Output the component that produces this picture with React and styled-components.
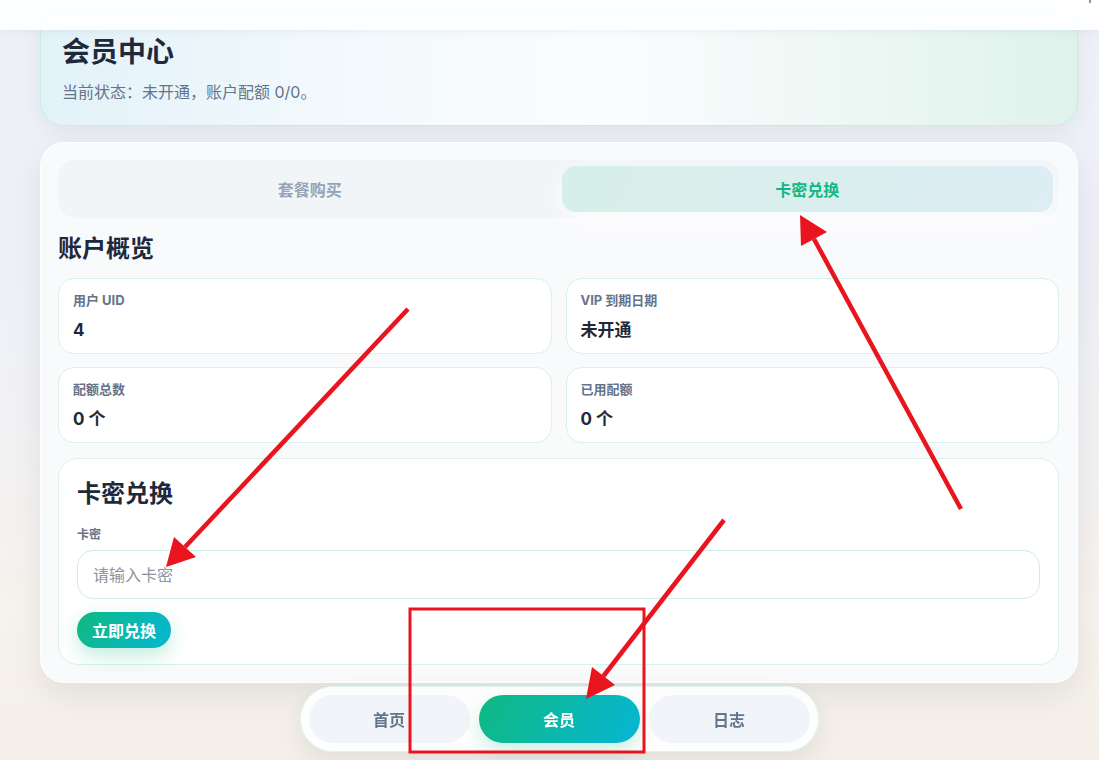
import React, { useState } from 'react'
import styled, { createGlobalStyle } from 'styled-components'

const GlobalStyle = createGlobalStyle`
  * { box-sizing: border-box; }
  html, body { height: 100%; }
  body {
    margin: 0;
    overflow: hidden;
    font-family: Inter, "Noto Sans CJK SC", sans-serif;
    color: #1e293b;
    background: linear-gradient(180deg, #eef0f9 0%, #f0f1f6 45%, #f6f2ed 80%, #f4efe8 100%);
  }
`

const TopBar = styled.div`
  position: fixed;
  top: 0;
  left: 0;
  right: 0;
  height: 30px;
  z-index: 5;
  display: flex;
  justify-content: flex-end;
  align-items: flex-start;
  background: rgba(253, 254, 255, 0.96);
  box-shadow: 0 2px 8px rgba(15, 23, 42, 0.05);
`

const TopAction = styled.div`
  width: 42px;
  height: 11px;
  background: #fff;
  border-bottom-left-radius: 6px;
  position: relative;

  &::after {
    content: '';
    position: absolute;
    top: 0;
    left: 32px;
    width: 2px;
    height: 3px;
    background: #8b93a7;
  }
`

const Page = styled.div`
  padding: 8px 21px 0 40px;
  display: flex;
  flex-direction: column;
  gap: 16px;
`

const Hero = styled.section`
  padding: 23px 22px 22px 21px;
  border-radius: 24px;
  border: 1px solid #c4ede0;
  background: linear-gradient(90deg, #e2f2f9 0%, #f2f9fc 28%, #fbfcfe 55%, #eef8f5 76%, #dff2eb 100%);
  box-shadow: 0 8px 24px rgba(15, 23, 42, 0.06);

  h1 {
    margin: 0;
    font-size: 28px;
    line-height: 40px;
    font-weight: 700;
    color: #1e293b;
  }

  p {
    margin: 9px 0 0;
    font-size: 16px;
    line-height: 22px;
    color: #64748b;
  }
`

const Panel = styled.section`
  padding: 17px 18px 17px 17px;
  border-radius: 24px;
  background: #f9fafc;
  border: 1px solid rgba(255, 255, 255, 0.9);
  box-shadow: 0 12px 32px rgba(15, 23, 42, 0.08);
`

const Tabs = styled.div`
  display: grid;
  grid-template-columns: 1fr 1fr;
  gap: 6px;
  padding: 6px;
  border-radius: 18px;
  background: #f1f5f8;
`

const Tab = styled.button`
  height: 46px;
  border: none;
  border-radius: 14px;
  font-family: inherit;
  font-size: 16px;
  font-weight: 700;
  cursor: pointer;
  color: ${p => (p.$active ? '#10b981' : '#94a3b8')};
  background: ${p => (p.$active ? 'linear-gradient(120deg, #d6efe8 0%, #daeeee 50%, #dcedf4 100%)' : 'transparent')};
  box-shadow: ${p => (p.$active ? '0 8px 22px rgba(255, 255, 255, 0.9)' : 'none')};
`

const SectionTitle = styled.h2`
  margin: 16px 0 14px;
  font-size: 24px;
  line-height: 30px;
  font-weight: 700;
  color: #1e293b;
`

const StatGrid = styled.div`
  display: grid;
  grid-template-columns: 1fr 1fr;
  gap: 13px 14px;
`

const StatCard = styled.div`
  padding: 13px 14px 10px;
  border-radius: 16px;
  background: #fff;
  border: 1px solid #d7f3ea;
`

const StatLabel = styled.div`
  font-size: 13px;
  line-height: 17px;
  font-weight: 700;
  color: #64748b;
`

const StatValue = styled.div`
  margin-top: 8px;
  font-size: 17px;
  line-height: 26px;
  font-weight: 700;
  color: #1e293b;
`

const RedeemCard = styled.div`
  margin-top: 15px;
  padding: 18px 18px 16px;
  border-radius: 20px;
  background: #fff;
  border: 1px solid #d7f3ea;

  h3 {
    margin: 0;
    font-size: 24px;
    line-height: 34px;
    font-weight: 700;
    color: #1e293b;
  }
`

const FieldLabel = styled.label`
  display: block;
  margin: 15px 0 7px;
  font-size: 12px;
  line-height: 17px;
  font-weight: 700;
  color: #64748b;
`

const Input = styled.input`
  display: block;
  width: 100%;
  height: 49px;
  padding: 0 15px;
  border-radius: 16px;
  border: 1px solid #cdeee4;
  background: #fff;
  font-family: inherit;
  font-size: 16px;
  color: #1e293b;
  outline: none;

  &::placeholder {
    color: #8e939c;
  }
`

const PrimaryButton = styled.button`
  margin-top: 13px;
  height: 36px;
  padding: 0 15px;
  border: none;
  border-radius: 18px;
  font-family: inherit;
  font-size: 16px;
  font-weight: 700;
  color: #fff;
  background: linear-gradient(120deg, #10b981 0%, #06b6d4 100%);
  box-shadow: 0 8px 20px rgba(16, 185, 129, 0.25);
  cursor: pointer;
`

const NavDock = styled.div`
  position: fixed;
  left: 40px;
  right: 21px;
  bottom: 8px;
  display: flex;
  justify-content: center;
  z-index: 4;
`

const Nav = styled.nav`
  display: grid;
  grid-template-columns: repeat(3, 161px);
  gap: 9px;
  padding: 8px;
  border-radius: 33px;
  background: rgba(255, 255, 255, 0.92);
  border: 1px solid #dff5ee;
  box-shadow: 0 10px 28px rgba(15, 23, 42, 0.08);
`

const NavItem = styled.button`
  height: 48px;
  border: none;
  border-radius: 24px;
  font-family: inherit;
  font-size: 16px;
  font-weight: 700;
  cursor: pointer;
  color: ${p => (p.$active ? '#fff' : '#64748b')};
  background: ${p => (p.$active ? 'linear-gradient(120deg, #10b981 0%, #06b6d4 100%)' : '#f1f5f9')};
  box-shadow: ${p => (p.$active ? '0 8px 20px rgba(16, 185, 129, 0.22)' : 'none')};
`

const Marks = styled.svg`
  position: fixed;
  inset: 0;
  width: 100%;
  height: 100%;
  pointer-events: none;
  z-index: 10;
`

const RED = '#ea141e'

// hand-drawn callouts: line from tail to the base of the head, then a filled head
const arrows = [
  { tail: [408, 309], tip: [166, 567], head: [[174, 537], [196, 557]] },
  { tail: [961, 509], tip: [800, 215], head: [[801, 246], [827, 232]] },
  { tail: [724, 520], tip: [586, 699], head: [[592, 667], [615, 685]] },
]

const Callouts = () => (
  <Marks viewBox="0 0 1099 760" preserveAspectRatio="none">
    {arrows.map((a, i) => {
      const bx = (a.head[0][0] + a.head[1][0]) / 2
      const by = (a.head[0][1] + a.head[1][1]) / 2
      return (
        <g key={i}>
          <line x1={a.tail[0]} y1={a.tail[1]} x2={bx} y2={by} stroke={RED} strokeWidth="4.5" />
          <polygon
            points={`${a.tip.join(',')} ${a.head[0].join(',')} ${a.head[1].join(',')}`}
            fill={RED}
          />
        </g>
      )
    })}
    <rect x="410" y="609" width="234" height="143" fill="none" stroke={RED} strokeWidth="3" />
  </Marks>
)

const stats = [
  { label: '用户 UID', value: '4' },
  { label: 'VIP 到期日期', value: '未开通' },
  { label: '配额总数', value: '0 个' },
  { label: '已用配额', value: '0 个' },
]

const App = () => {
  const [tab, setTab] = useState('redeem')
  const [code, setCode] = useState('')

  return (
    <>
      <GlobalStyle />
      <TopBar>
        <TopAction />
      </TopBar>

      <Page>
        <Hero>
          <h1>会员中心</h1>
          <p>当前状态：未开通，账户配额 0/0。</p>
        </Hero>

        <Panel>
          <Tabs>
            <Tab $active={tab === 'plans'} onClick={() => setTab('plans')}>套餐购买</Tab>
            <Tab $active={tab === 'redeem'} onClick={() => setTab('redeem')}>卡密兑换</Tab>
          </Tabs>

          <SectionTitle>账户概览</SectionTitle>
          <StatGrid>
            {stats.map(s => (
              <StatCard key={s.label}>
                <StatLabel>{s.label}</StatLabel>
                <StatValue>{s.value}</StatValue>
              </StatCard>
            ))}
          </StatGrid>

          <RedeemCard>
            <h3>卡密兑换</h3>
            <FieldLabel htmlFor="card-code">卡密</FieldLabel>
            <Input
              id="card-code"
              placeholder="请输入卡密"
              value={code}
              onChange={e => setCode(e.target.value)}
            />
            <PrimaryButton>立即兑换</PrimaryButton>
          </RedeemCard>
        </Panel>
      </Page>

      <NavDock>
        <Nav>
          <NavItem>首页</NavItem>
          <NavItem $active>会员</NavItem>
          <NavItem>日志</NavItem>
        </Nav>
      </NavDock>

      <Callouts />
    </>
  )
}

export default App
